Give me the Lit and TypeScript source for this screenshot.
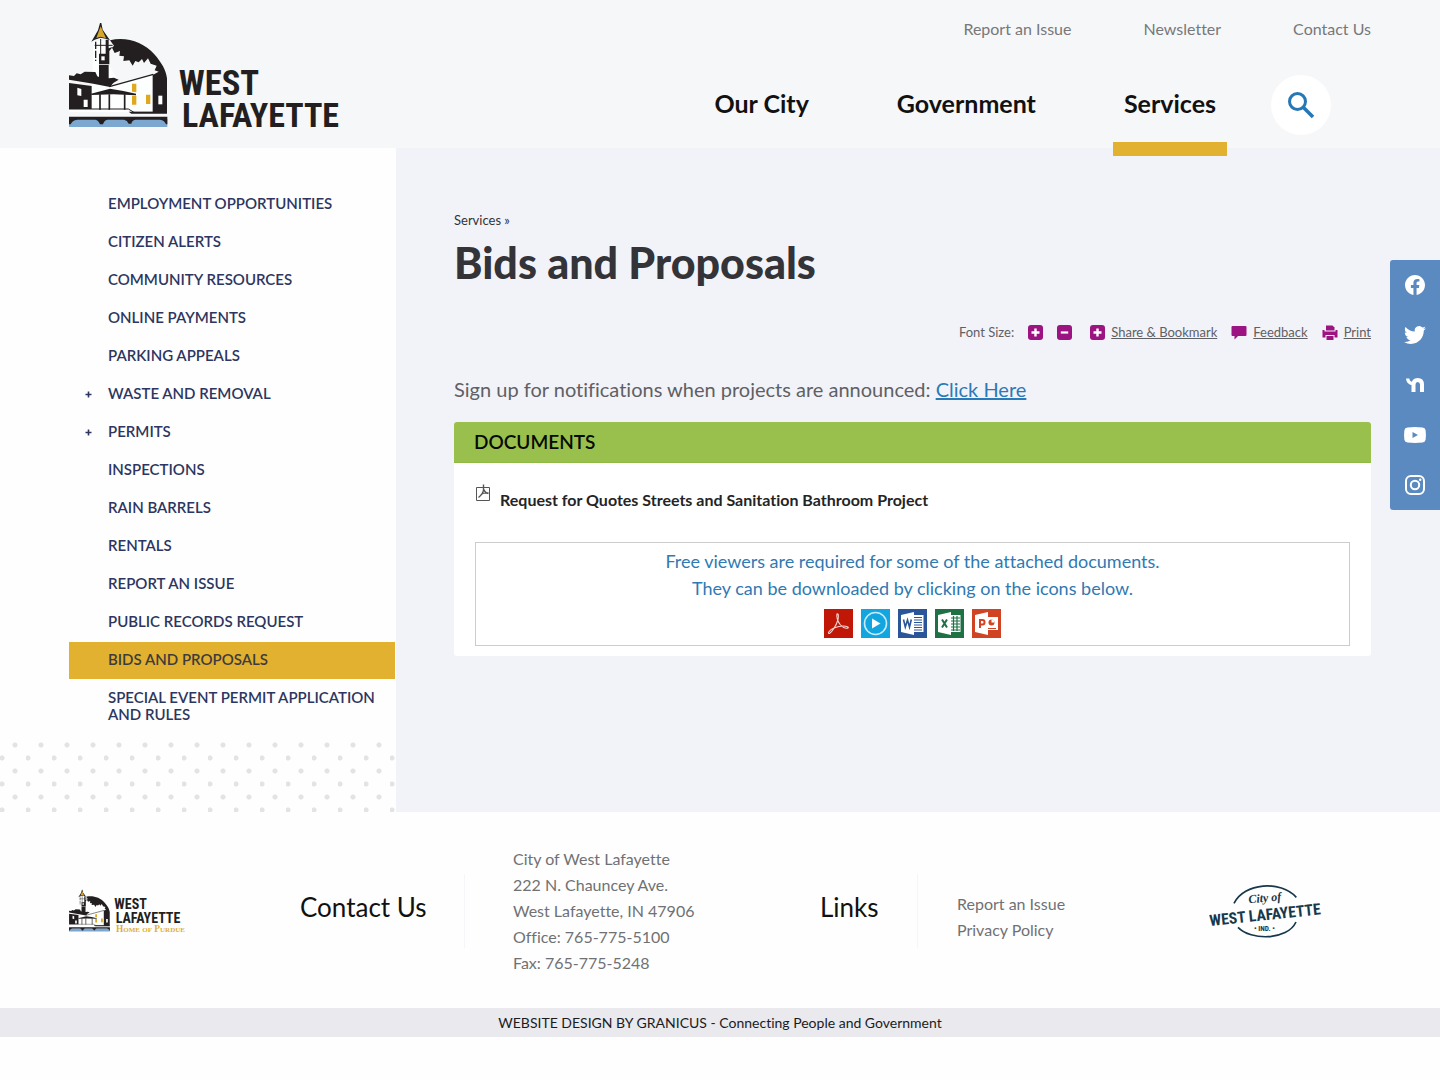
import { LitElement, html, svg, css } from "lit";
import { customElement } from "lit/decorators.js";
import { classMap } from "lit/directives/class-map.js";

interface SideItem {
  label: string;
  expandable?: boolean;
  current?: boolean;
}

const SIDE_ITEMS: SideItem[] = [
  { label: "Employment Opportunities" },
  { label: "Citizen Alerts" },
  { label: "Community Resources" },
  { label: "Online Payments" },
  { label: "Parking Appeals" },
  { label: "Waste and Removal", expandable: true },
  { label: "Permits", expandable: true },
  { label: "Inspections" },
  { label: "Rain Barrels" },
  { label: "Rentals" },
  { label: "Report an Issue" },
  { label: "Public Records Request" },
  { label: "Bids and Proposals", current: true },
  { label: "Special Event Permit Application and Rules" },
];

/* Train depot, clock tower and river: shared by the header and footer logos. */
const depotArt = svg`
  <path fill="#fff" d="M100 78H146V150L175 196L150 214L280 178V292H27V206L95 214Z" opacity=".8"/>
  <path fill="#231f20" d="M150 76C200 64 250 82 283 118C305 143 318 166 321 190V296H214L206 290H278V180L296 170L284 166L290 152L272 146L264 130L252 144L246 132L236 142L226 138L218 152L208 136L190 138L192 124L178 122L180 108L164 114L156 98L162 92Z"/>
  <path fill="none" stroke="#231f20" stroke-width="4" d="M148 215L280 178"/>
  <path fill="#231f20" d="M27 181L42 183L50 175L62 178L74 170L106 171L112 184L117 186V150H146V190L162 188L176 194L160 204L150 216L100 206L27 194Z"/>
  <path fill="#231f20" d="M27 204L95 213V282H27Z"/>
  <path fill="#fff" d="M52 218L64 222V243L52 241ZM71 254H83V276H71Z"/>
  <path fill="#231f20" d="M93 236L150 221L190 228L228 236V241L160 238L95 240Z"/>
  <path fill="none" stroke="#231f20" stroke-width="5" d="M120 238V284M148 238V284M194 238V284"/>
  <path fill="none" stroke="#231f20" stroke-width="3" d="M27 282H205L222 292H321"/>
  <path fill="#e0a81e" d="M216 206H229V232L216 230ZM216 242H229V269H216ZM258 239H271V267H258Z"/>
  <path fill="#fff" d="M295 242H307V268H295Z"/>
  <path fill="#231f20" d="M120 24L124 24L128 44L150 76L140 72L122 68L104 74L94 80L114 46Z"/>
  <path fill="#d4a72c" d="M122 34L138 70L122 65L109 69Z"/>
  <path fill="none" stroke="#231f20" stroke-width="4" d="M107 80V138" stroke-dasharray="22 5"/>
  <path fill="none" stroke="#231f20" stroke-width="3" d="M122 72V118M104 91H158"/>
  <path fill="#231f20" d="M137 74H146V100L158 96L148 108V148H117V116H137Z"/>
  <path fill="#fff" d="M124 124H134V136H124Z"/>
  <path fill="#7ba7d0" d="M27 312H322V336H27Z"/>
  <path fill="#231f20" d="M27 305H322V328H318Q314 316 300 314H226Q216 316 214 326H206Q202 316 192 314H142Q132 316 129 328H120Q116 316 106 314H52Q36 316 32 328H27Z"/>
`;

@customElement("app-root")
export class AppRoot extends LitElement {
  static styles = css`
    :host {
      display: block;
      position: relative;
      min-height: 100vh;
      background: #fefefe;
      color: #5f6064;
      font-family: Lato, "Open Sans", sans-serif;
      font-size: 16px;
      font-variant-ligatures: none;
    }
    * {
      box-sizing: border-box;
    }
    a {
      color: inherit;
      text-decoration: none;
    }
    svg {
      display: block;
      overflow: visible;
    }
    ul,
    h1,
    h2,
    p,
    address {
      margin: 0;
      padding: 0;
      list-style: none;
      font-style: normal;
    }
    button {
      margin: 0;
      padding: 0;
      border: 0;
      background: none;
      font: inherit;
      color: inherit;
      cursor: pointer;
    }

    .header {
      display: flex;
      justify-content: space-between;
      align-items: flex-start;
      height: 148px;
      padding: 0 69px;
      background: #f6f7f8;
    }
    .brand {
      margin-top: 22px;
    }
    .logo-text {
      font-family: "Liberation Sans Narrow", "Roboto Condensed", Roboto, sans-serif;
      font-weight: 700;
      fill: #231f20;
    }
    .header-right {
      display: flex;
      flex-direction: column;
      align-items: flex-end;
    }
    .utility {
      display: flex;
      gap: 72px;
      padding-top: 19px;
      line-height: 20px;
      color: #77787b;
    }
    .primary {
      display: flex;
      align-items: center;
      margin: 36px 40px 0 0;
    }
    .nav-list {
      display: flex;
      gap: 66px;
      margin-right: 44px;
    }
    .nav-link {
      display: block;
      position: relative;
      padding: 0 11px 4px;
      color: #111;
      font-size: 25px;
      font-weight: 700;
      line-height: 56px;
    }
    .nav-link.current::after {
      content: "";
      position: absolute;
      left: 0;
      right: 0;
      top: 67px;
      height: 14px;
      background: #e3b130;
    }
    .search {
      display: grid;
      place-items: center;
      width: 60px;
      height: 60px;
      border-radius: 50%;
      background: #fff;
    }

    .body {
      display: grid;
      grid-template-columns: 27.5% 1fr;
      background: #f2f3f8;
    }
    .sidebar {
      display: flex;
      flex-direction: column;
      background: #fefefe;
    }
    .side-list {
      flex: 1;
      padding: 38px 1px 7px 69px;
      color: #2c3660;
      font-size: 15px;
      font-weight: 600;
      line-height: 17px;
      text-transform: uppercase;
    }
    .side-item {
      display: flex;
      margin-bottom: 1px;
    }
    .side-item.current {
      background: #e3b130;
      color: #3d3c3c;
    }
    .side-toggle {
      width: 39px;
      display: grid;
      place-items: center;
    }
    .side-link {
      flex: 1;
      padding: 9px 0 11px;
    }
    .dots {
      height: 70px;
      background-image: radial-gradient(circle at 15px 3px, #e3e3e6 2px, transparent 3px),
        radial-gradient(circle at 2px 16px, #e3e3e6 2px, transparent 3px);
      background-size: 26px 26px;
    }

    .main {
      padding: 62px 69px 40px 58px;
    }
    .crumbs {
      font-size: 13px;
      line-height: 20px;
      color: #333;
    }
    .title {
      color: #333338;
      font-size: 43px;
      font-weight: 900;
      line-height: 56px;
      margin-top: 5px;
    }
    .tools {
      display: flex;
      justify-content: flex-end;
      align-items: center;
      gap: 14px;
      margin-top: 31px;
      font-size: 13px;
      line-height: 20px;
    }
    .tool {
      display: flex;
      align-items: center;
      gap: 6px;
    }
    .tool.first {
      margin-left: 4px;
    }
    .tool span {
      text-decoration: underline;
    }
    .intro {
      margin-top: 32px;
      font-size: 20px;
      line-height: 30px;
    }
    .intro a {
      color: #2a7ab9;
      text-decoration: underline;
    }
    .card {
      margin-top: 18px;
      border-radius: 3px;
      overflow: hidden;
      background: #fff;
    }
    .card-title {
      padding: 0 20px;
      background: #99c04d;
      color: #060a02;
      font-size: 19px;
      font-weight: 600;
      line-height: 40px;
      border-bottom: 1px solid #8fbb45;
    }
    .card-body {
      padding: 21px 21px 10px;
    }
    .doc {
      display: flex;
      gap: 9px;
    }
    .doc-link {
      padding-top: 6px;
      color: #242426;
      font-size: 16px;
      font-weight: 700;
      line-height: 20px;
    }
    .viewers {
      margin-top: 32px;
      padding: 5px;
      border: 1px solid #ccc;
      color: #3079b2;
      font-size: 18px;
      line-height: 27px;
      text-align: center;
    }
    .viewer-icons {
      display: flex;
      justify-content: center;
      gap: 8px;
      margin: 7px 0 2px;
    }

    .social {
      position: absolute;
      top: 260px;
      right: 0;
      width: 50px;
      border-radius: 3px 0 0 3px;
      background: #5a8abf;
    }
    .social-link {
      display: grid;
      place-items: center;
      height: 50px;
    }

    .footer {
      display: grid;
      grid-template-columns: 231fr 165fr 355fr 98fr 291fr 162fr;
      align-items: center;
      padding: 34px 69px 32px;
      color: #707174;
      line-height: 26px;
    }
    .footer-title {
      padding-bottom: 8px;
      color: #111;
      font-size: 26px;
      font-weight: 400;
      line-height: 66px;
      border-right: 1px solid #f6f6f8;
    }
    .address {
      padding-left: 48px;
    }
    .footer-links {
      padding: 12px 0 0 39px;
    }
    .seal-text {
      font-family: "Liberation Sans Narrow", "Roboto Condensed", Roboto, sans-serif;
      font-weight: 700;
      fill: #17384a;
    }
    .script-text {
      font-family: "Liberation Serif", serif;
      font-style: italic;
      font-weight: 700;
      fill: #17384a;
    }
    .purdue-text {
      font-family: "Liberation Serif", serif;
      font-variant: small-caps;
      font-weight: 700;
      fill: #dfae33;
    }
    .credit {
      background: #e9e9ee;
      color: #1b1b1d;
      font-size: 14px;
      line-height: 29px;
      text-align: center;
    }
  `;

  private renderHeader() {
    return html`
      <header class="header">
        <a class="brand" href="#home" aria-label="West Lafayette">
          <svg width="270" height="105" viewBox="27 21 810 315">
            ${depotArt}
            <text class="logo-text" x="356" y="239" font-size="104">WEST</text>
            <text class="logo-text" x="366" y="335" font-size="102">LAFAYETTE</text>
          </svg>
        </a>
        <div class="header-right">
          <nav class="utility" aria-label="Utility">
            <a href="#report">Report an Issue</a>
            <a href="#newsletter">Newsletter</a>
            <a href="#contact">Contact Us</a>
          </nav>
          <div class="primary">
            <nav class="nav-list" aria-label="Primary">
              <a class="nav-link" href="#city">Our City</a>
              <a class="nav-link" href="#government">Government</a>
              <a class="nav-link current" href="#services">Services</a>
            </nav>
            <button class="search" aria-label="Search">
              <svg width="28" height="28" viewBox="0 0 28 28" fill="none" stroke="#2577b5">
                <circle cx="10.5" cy="10.5" r="8" stroke-width="3" />
                <path d="M16.5 16.5L26 26" stroke-width="3.6" />
              </svg>
            </button>
          </div>
        </div>
      </header>
    `;
  }

  private renderSideItem(item: SideItem) {
    return html`
      <li class=${classMap({ "side-item": true, current: !!item.current })}>
        ${item.expandable
          ? html`<button class="side-toggle" aria-label="Expand ${item.label}">
              <svg width="7" height="7" viewBox="0 0 7 7" stroke="#2c3660" stroke-width="1.6">
                <path d="M3.5 .5V6.5M.5 3.5H6.5" />
              </svg>
            </button>`
          : html`<span class="side-toggle"></span>`}
        <a class="side-link" href="#section">${item.label}</a>
      </li>
    `;
  }

  private renderTools() {
    const plus = svg`<rect x="0" y="0" width="15" height="15" rx="3" fill="#9c1382"/><path d="M7.5 3.5V11.5M3.5 7.5H11.5" stroke="#fff" stroke-width="2.4"/>`;
    return html`
      <div class="tools">
        <span>Font Size:</span>
        <button aria-label="Increase font size">
          <svg width="15" height="15" viewBox="0 0 15 15">${plus}</svg>
        </button>
        <button aria-label="Decrease font size">
          <svg width="15" height="15" viewBox="0 0 15 15">
            <rect width="15" height="15" rx="3" fill="#9c1382" />
            <path d="M3.8 7.5H11.2" stroke="#fff" stroke-width="2.2" />
          </svg>
        </button>
        <a class="tool first" href="#share">
          <svg width="15" height="15" viewBox="0 0 15 15">${plus}</svg>
          <span>Share &amp; Bookmark</span>
        </a>
        <a class="tool" href="#feedback">
          <svg width="16" height="15" viewBox="0 0 16 15" fill="#9c1382">
            <path d="M1.5 1H14.5Q15.5 1 15.5 2V10Q15.5 11 14.5 11H7L3.5 14.5V11H1.5Q.5 11 .5 10V2Q.5 1 1.5 1Z" />
          </svg>
          <span>Feedback</span>
        </a>
        <a class="tool" href="#print">
          <svg width="16" height="15" viewBox="0 0 16 15" fill="#9c1382">
            <path d="M4 .5H10.5L12.5 2.5V5.5H4Z" />
            <path d="M.5 5H2.5V6.5H13.5V5H15.5V12.5H12.5V10H3.5V12.5H.5Z" />
            <path d="M4.5 11H11.5V15H4.500Z" />
          </svg>
          <span>Print</span>
        </a>
      </div>
    `;
  }

  private renderViewers() {
    return html`
      <div class="viewers">
        <p>Free viewers are required for some of the attached documents.</p>
        <p>They can be downloaded by clicking on the icons below.</p>
        <div class="viewer-icons">
          <a href="#pdf" aria-label="Acrobat viewer">
            <svg width="29" height="29" viewBox="0 0 29 29">
              <rect width="29" height="29" fill="#c01707" />
              <path
                d="M13 5C15 4 14.5 9 13.5 12C12 17 8 23 5.5 24.5C3 25 5 21 10 19C15 17 21 16.5 24 18C25.5 20 20 20 16.5 16C14 13 12 8 13 5Z"
                fill="none" stroke="#f6d6d2" stroke-width="1.1"
              />
            </svg>
          </a>
          <a href="#media" aria-label="Media viewer">
            <svg width="29" height="29" viewBox="0 0 29 29">
              <rect width="29" height="29" fill="#12a5e0" />
              <circle cx="14.5" cy="14.5" r="11" fill="none" stroke="#c6ebfa" stroke-width="1.6" />
              <path d="M11 9.5L19.5 14.5L11 19.5Z" fill="#fff" />
            </svg>
          </a>
          <a href="#word" aria-label="Word viewer">
            <svg width="29" height="29" viewBox="0 0 29 29">
              <rect width="29" height="29" fill="#2a5599" />
              <path d="M15 6H25.5V23H15Z" fill="#fff" />
              <path d="M16 8.5H24M16 11H24M16 13.5H24M16 16H24M16 18.5H24M16 21H24" stroke="#2a5599" />
              <path d="M3 6L16 3V26L3 23Z" fill="#fff" />
              <path d="M5.5 10.5L7.3 18L9.5 11L11.5 18L13.3 10.5" fill="none" stroke="#2a5599" stroke-width="1.6" />
            </svg>
          </a>
          <a href="#excel" aria-label="Excel viewer">
            <svg width="29" height="29" viewBox="0 0 29 29">
              <rect width="29" height="29" fill="#1e7145" />
              <path d="M15 6H25.5V23H15Z" fill="#fff" />
              <path d="M16 9H25M16 12H25M16 15H25M16 18H25M16 21H25M18.5 7V22M22 7V22" stroke="#1e7145" stroke-width="1.2" />
              <path d="M3 6L16 3V26L3 23Z" fill="#fff" />
              <path d="M7 10.5L12 18.5M12 10.5L7 18.5" stroke="#1e7145" stroke-width="2" />
            </svg>
          </a>
          <a href="#powerpoint" aria-label="PowerPoint viewer">
            <svg width="29" height="29" viewBox="0 0 29 29">
              <rect width="29" height="29" fill="#d04423" />
              <path d="M15 8H26V21H15Z" fill="#fff" />
              <path d="M16 19.5H24" stroke="#d04423" />
              <circle cx="19.5" cy="13.5" r="3" fill="#d04423" />
              <path d="M19.5 13.5V10.5A3 3 0 0 1 22.5 13.5Z" fill="#fff" />
              <path d="M3 6L16 3V26L3 23Z" fill="#fff" />
              <path d="M8 19V11H10.5Q12.5 11 12.5 13.2T10.5 15.5H8" fill="none" stroke="#d04423" stroke-width="2" />
            </svg>
          </a>
        </div>
      </div>
    `;
  }

  private renderSocial() {
    return html`
      <nav class="social" aria-label="Social media">
        <a class="social-link" href="#facebook" aria-label="Facebook">
          <svg width="20" height="20" viewBox="0 0 24 24" fill="#fff">
            <path d="M24 12.07C24 5.4 18.63 0 12 0S0 5.4 0 12.07C0 18.1 4.39 23.1 10.13 24V15.56H7.08V12.07H10.13V9.41C10.13 6.39 11.92 4.72 14.66 4.72C15.97 4.72 17.34 4.95 17.34 4.95V7.92H15.83C14.34 7.92 13.88 8.85 13.88 9.8V12.07H17.2L16.67 15.56H13.88V24C19.61 23.1 24 18.1 24 12.07Z" />
          </svg>
        </a>
        <a class="social-link" href="#twitter" aria-label="Twitter">
          <svg width="22" height="22" viewBox="0 0 24 24" fill="#fff">
            <path d="M23.95 4.57a10 10 0 0 1-2.82.77 4.96 4.96 0 0 0 2.16-2.72c-.95.55-2 .95-3.13 1.18a4.92 4.92 0 0 0-8.38 4.48C7.69 8.09 4.07 6.13 1.64 3.16a4.82 4.82 0 0 0-.67 2.48c0 1.71.87 3.21 2.19 4.1a4.9 4.9 0 0 1-2.23-.62v.06a4.92 4.92 0 0 0 3.95 4.83 5 5 0 0 1-2.21.08 4.94 4.94 0 0 0 4.6 3.42A9.87 9.87 0 0 1 0 19.54a13.94 13.94 0 0 0 7.55 2.21c9.05 0 14-7.5 14-13.98 0-.21 0-.42-.02-.63a9.94 9.94 0 0 0 2.46-2.55z" />
          </svg>
        </a>
        <a class="social-link" href="#nextdoor" aria-label="Nextdoor">
          <svg width="20" height="20" viewBox="0 0 20 20" fill="none" stroke="#fff">
            <path d="M8.5 17V9.5Q8.5 5 12.7 5T17 9.5V17" stroke-width="4" />
            <path d="M2.7 3.5Q3 8.5 8 8.5" stroke-width="3.4" />
          </svg>
        </a>
        <a class="social-link" href="#youtube" aria-label="YouTube">
          <svg width="22" height="16" viewBox="0 0 22 16">
            <path fill="#fff" fill-rule="evenodd" d="M3.5 .4Q11-.4 18.5 .4Q21.2 .7 21.6 3.2Q22.3 8 21.6 12.8Q21.2 15.3 18.5 15.6Q11 16.4 3.5 15.6Q.8 15.3 .4 12.8Q-.3 8 .4 3.2Q.8 .7 3.5 .4ZM8.5 5V11L14 8Z" />
          </svg>
        </a>
        <a class="social-link" href="#instagram" aria-label="Instagram">
          <svg width="20" height="20" viewBox="0 0 20 20" fill="none" stroke="#fff" stroke-width="2">
            <rect x="1" y="1" width="18" height="18" rx="5" />
            <circle cx="10" cy="10" r="4.2" />
            <circle cx="15.2" cy="4.8" r="1.2" fill="#fff" stroke="none" />
          </svg>
        </a>
      </nav>
    `;
  }

  private renderFooter() {
    return html`
      <footer>
        <div class="footer">
          <a href="#home" aria-label="West Lafayette, Home of Purdue">
            <svg width="113" height="44" viewBox="27 24 339 132">
              <g transform="translate(16 17) scale(.415 .4)">${depotArt}</g>
              <text class="logo-text" x="163" y="84" font-size="42">WEST</text>
              <text class="logo-text" x="167" y="126" font-size="42">LAFAYETTE</text>
              <text class="purdue-text" x="168" y="154" font-size="28">Home of Purdue</text>
            </svg>
          </a>
          <h2 class="footer-title">Contact Us</h2>
          <address class="address">
            <p>City of West Lafayette</p>
            <p>222 N. Chauncey Ave.</p>
            <p>West Lafayette, IN 47906</p>
            <p>Office: 765-775-5100</p>
            <p>Fax: 765-775-5248</p>
          </address>
          <h2 class="footer-title">Links</h2>
          <ul class="footer-links">
            <li><a href="#report">Report an Issue</a></li>
            <li><a href="#privacy">Privacy Policy</a></li>
          </ul>
          <svg width="114" height="52" viewBox="25 25 342 156" role="img" aria-label="City of West Lafayette, Indiana">
            <g fill="none" stroke="#17384a" stroke-width="5">
              <path d="M100 80C130 18 240 10 287 62" />
              <path d="M112 152C150 192 260 192 286 136" />
            </g>
            <text class="script-text" x="144" y="80" font-size="36" transform="rotate(-5 144 80)">City of</text>
            <text class="seal-text" x="28" y="148" font-size="47" transform="rotate(-6 28 148)">WEST LAFAYETTE</text>
            <text class="seal-text" x="160" y="162" font-size="22">• IND. •</text>
          </svg>
        </div>
        <p class="credit">
          <a href="#granicus">WEBSITE DESIGN BY GRANICUS</a> - Connecting People and Government
        </p>
      </footer>
    `;
  }

  render() {
    return html`
      ${this.renderHeader()}
      <div class="body">
        <aside class="sidebar">
          <ul class="side-list">
            ${SIDE_ITEMS.map((item) => this.renderSideItem(item))}
          </ul>
          <div class="dots"></div>
        </aside>
        <main class="main">
          <nav class="crumbs" aria-label="Breadcrumb"><a href="#services">Services</a> »</nav>
          <h1 class="title">Bids and Proposals</h1>
          ${this.renderTools()}
          <p class="intro">
            Sign up for notifications when projects are announced: <a href="#signup">Click Here</a>
          </p>
          <section class="card">
            <h2 class="card-title">DOCUMENTS</h2>
            <div class="card-body">
              <div class="doc">
                <svg width="16" height="17" viewBox="0 0 16 17" fill="none" stroke="#555">
                  <path d="M1.5 3.5H14.5V16.5H1.5Z" />
                  <path d="M8.5 .5V6Q8 10 3.5 13.5M8.5 5Q10 9 13.5 9.5M6 10.5Q9 8.5 13.5 9" stroke-width="1.4" />
                </svg>
                <a class="doc-link" href="#bathroom">Request for Quotes Streets and Sanitation Bathroom Project</a>
              </div>
              ${this.renderViewers()}
            </div>
          </section>
        </main>
      </div>
      ${this.renderFooter()} ${this.renderSocial()}
    `;
  }
}
